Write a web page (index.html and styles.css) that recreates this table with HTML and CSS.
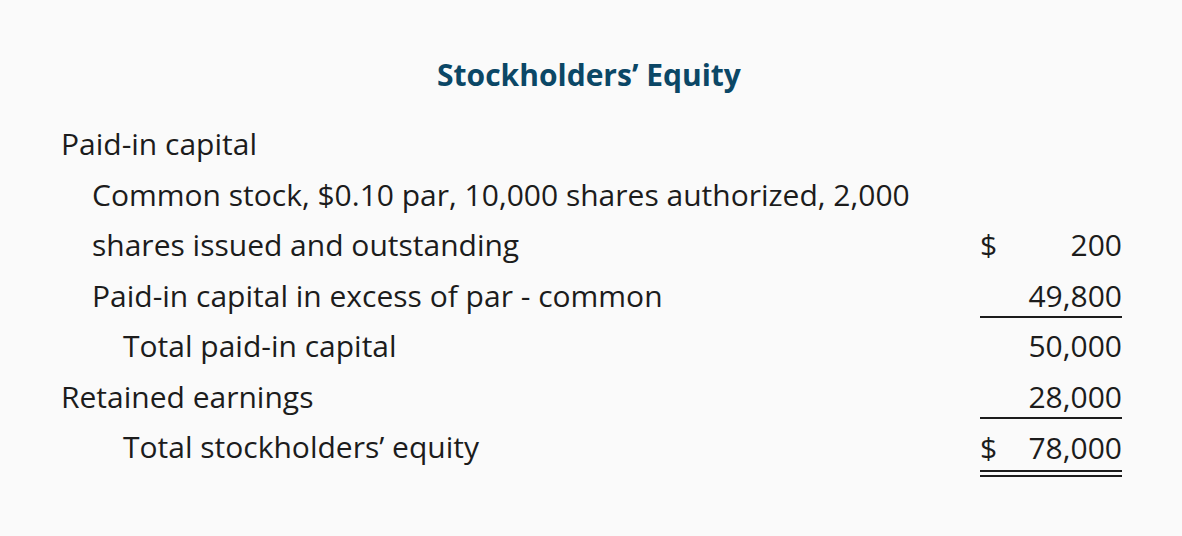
FILE: index.html
```html
<!DOCTYPE html>
<html>
<head>
<meta charset="utf-8">
<link rel="stylesheet" href="styles.css">
</head>
<body>
<div class="sheet">
  <h1 class="title">Stockholders’ Equity</h1>
  <div class="rows">
    <div class="row">
      <div class="label l0">Paid-in capital</div>
      <div class="amt"></div>
    </div>
    <div class="row">
      <div class="label l1">Common stock, $0.10 par, 10,000 shares authorized, 2,000 shares issued and outstanding</div>
      <div class="amt"><span class="cur">$</span><span class="num">200</span></div>
    </div>
    <div class="row">
      <div class="label l1">Paid-in capital in excess of par - common</div>
      <div class="amt single"><span class="cur"></span><span class="num">49,800</span></div>
    </div>
    <div class="row">
      <div class="label l2">Total paid-in capital</div>
      <div class="amt"><span class="cur"></span><span class="num">50,000</span></div>
    </div>
    <div class="row">
      <div class="label l0">Retained earnings</div>
      <div class="amt single"><span class="cur"></span><span class="num">28,000</span></div>
    </div>
    <div class="row">
      <div class="label l2">Total stockholders’ equity</div>
      <div class="amt double"><span class="cur">$</span><span class="num">78,000</span></div>
    </div>
  </div>
</div>
</body>
</html>
```

FILE: styles.css
```css
html, body {
  margin: 0;
  padding: 0;
  background: #fafafa;
}
body {
  font-family: "Open Sans", "Noto Sans", sans-serif;
  color: #1c1c1c;
}
.sheet {
  width: 1182px;
  height: 536px;
  box-sizing: border-box;
  padding: 55px 60px 0 61px;
}
.title {
  margin: 0 0 0 -63px;
  width: 1182px;
  text-align: center;
  font-size: 30px;
  line-height: 40px;
  font-weight: 700;
  color: #0b4766;
}
.rows {
  margin-top: 24px;
  display: flex;
  flex-direction: column;
}
.row {
  display: grid;
  grid-template-columns: 1fr 142px;
  column-gap: 20px;
  align-items: end;
}
.label {
  font-size: 30px;
  line-height: 50.5px;
}
.l1 { padding-left: 31px; }
.l2 { padding-left: 62px; }
.amt {
  display: flex;
  justify-content: space-between;
  font-size: 30px;
  line-height: 50.5px;
}
.amt.single {
  line-height: 41px;
  margin-bottom: 3px;
  border-bottom: 2px solid #1c1c1c;
}
.amt.double {
  line-height: 41px;
  padding-bottom: 2px;
  margin-bottom: -4px;
  border-bottom: 7px double #1c1c1c;
}
```
